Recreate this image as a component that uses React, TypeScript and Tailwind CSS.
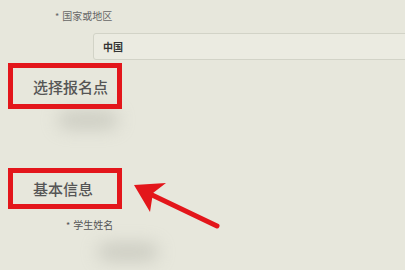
import React from 'react'

const cjk = { fontFamily: '"Noto Sans CJK SC", "Noto Sans", sans-serif' }

function Smudge({ className }: { className: string }) {
  return <div className={`absolute rounded-full bg-[#a9aaa0] blur-[9px] opacity-50 ${className}`} />
}

export default function App() {
  return (
    <div className="relative w-[405px] h-[270px] overflow-hidden bg-[#e7e7dc]" style={cjk}>
      {/* blurred shadows from the photo */}
      <Smudge className="left-[58px] top-[112px] w-[60px] h-[16px]" />
      <Smudge className="left-[98px] top-[244px] w-[60px] h-[16px]" />

      <div className="relative flex flex-col">
        {/* country field */}
        <div className="pt-[8px] pl-[55px] text-[10px] leading-[16px] text-[#666]">
          <span className="mr-[3px] text-[9px]">*</span>国家或地区
        </div>
        <div className="mt-[8px] ml-[93px] mr-[-10px] h-[27px] flex items-center pl-[9px] border border-[#d2d3c7] rounded-[3px] bg-[#ebebe1]">
          <span className="text-[10px] font-bold text-[#333]">中国</span>
        </div>

        {/* section: 选择报名点 */}
        <div className="mt-[3px] ml-[8px] w-[114px] h-[46px] border-[5px] border-[#e3161b] flex items-center pl-[20px]">
          <span className="text-[15px] leading-none font-medium text-[#555]">选择报名点</span>
        </div>

        {/* section: 基本信息 */}
        <div className="mt-[59px] ml-[8px] w-[114px] h-[41px] border-[5px] border-[#e3161b] flex items-center pl-[20px]">
          <span className="text-[15px] leading-none font-medium text-[#555]">基本信息</span>
        </div>

        <div className="mt-[8px] pl-[66px] text-[10px] leading-[16px] text-[#555]">
          <span className="mr-[3px] text-[9px]">*</span>学生姓名
        </div>
      </div>

      {/* annotation arrow */}
      <svg className="absolute left-0 top-0" width="405" height="270" viewBox="0 0 405 270">
        <line x1="150" y1="194" x2="217" y2="226" stroke="#e3161b" strokeWidth="5" strokeLinecap="round" />
        <polygon points="134,185 166,183 153,193 150,212" fill="#e3161b" />
      </svg>
    </div>
  )
}
